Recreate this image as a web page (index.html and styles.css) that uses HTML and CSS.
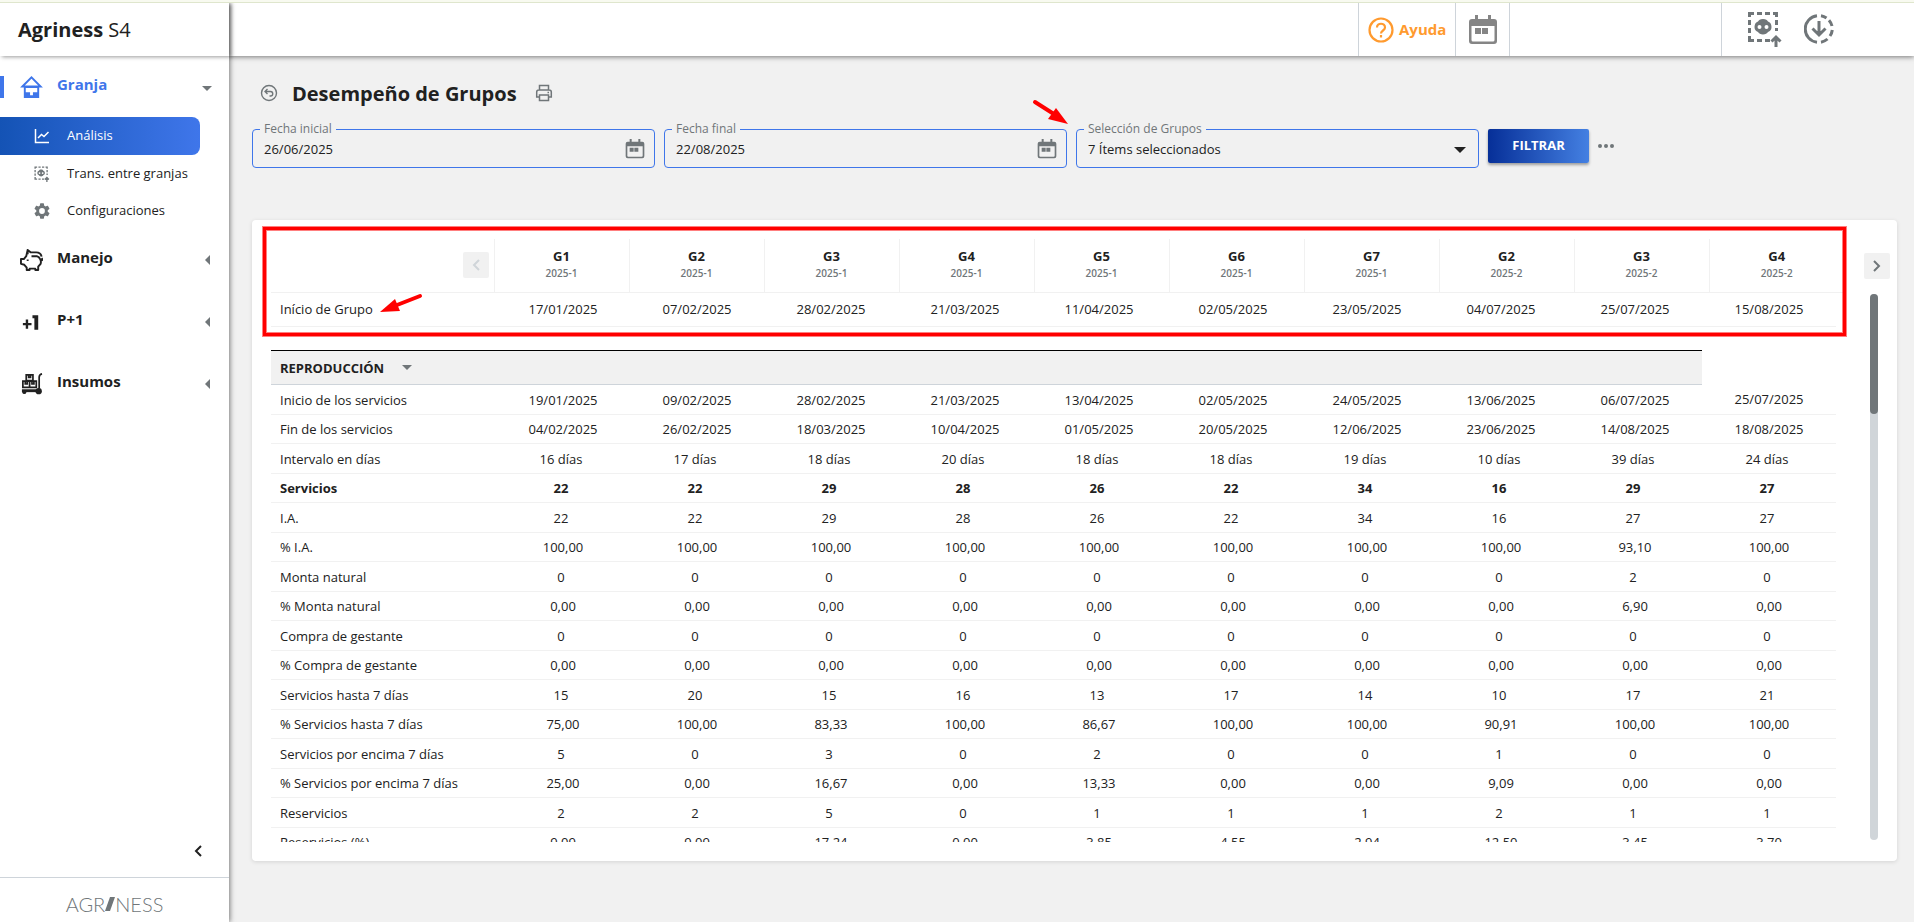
FILE: index.html
```html
<!DOCTYPE html>
<html lang="es">
<head>
    <meta charset="UTF-8">
    <meta name="viewport" content="width=device-width, initial-scale=1.0">
    <title>Agriness S4 - Desempeño de Grupos</title>
    <link rel="stylesheet" href="styles.css">
</head>
<body>

    <!-- Shared icons -->
    <svg class="sprite" aria-hidden="true">
        <symbol id="i-calendar" viewBox="0 0 30 30">
            <path fill="currentColor" fill-rule="evenodd" d="M7 0h3v4h10V0h3v4h3a3 3 0 0 1 3 3v19a3 3 0 0 1-3 3H4a3 3 0 0 1-3-3V7a3 3 0 0 1 3-3h3zM3.500 11v14a1.500 1.500 0 0 0 1.500 1.500h20a1.500 1.500 0 0 0 1.500-1.500V11z"/>
            <path fill="currentColor" d="M7 13h6v6H7zM14 13h6v6h-6z"/>
        </symbol>
        <symbol id="i-transfer" viewBox="0 0 34 36">
            <g fill="none" stroke="currentColor" stroke-width="3">
                <path d="M1.500 6V2.500H6M9 2.500h5M17 2.500h5M25 2.500h3.500V6M1.500 9v5M1.500 17v5M1.500 25v4.500H6M9 29.500h5M17 29.500h5M28.500 9v5M28.500 17v3"/>
                <path d="M28 36V26M23.500 30.500l4.500-4.500 4.500 4.500"/>
            </g>
            <path fill="currentColor" fill-rule="evenodd" d="M15 8c3 0 4 1 5 2.500 2 .5 3.500 2.500 3.500 5.500s-1.500 4-3.500 5c-1 1.500-2.500 2.500-5 2.500s-4-1-5-2.500c-2-1-3.500-2-3.500-5s1.500-5 3.500-5.500C11 9 12 8 15 8zM11.500 14a2 2 0 1 0 0 4 2 2 0 0 0 0-4zM18.500 14a2 2 0 1 0 0 4 2 2 0 0 0 0-4z"/>
        </symbol>
    </svg>

    <div class="app">
        <aside class="sidebar">
            <div class="brand"><b>Agriness</b> S4</div>

            <nav class="menu">
                <a href="#" class="menu-item active">
                    <svg class="menu-icon" viewBox="0 0 24 24"><path d="M2.500 11.500L12 2l9.500 9.500z" fill="none" stroke="currentColor" stroke-width="2"/><path fill="currentColor" fill-rule="evenodd" d="M4 11h16v12.500H4zM6 13v4.500h4.500v3h3v-3H18V13z"/></svg>
                    <span>Granja</span>
                    <i class="caret-down"></i>
                </a>
                <div class="submenu">
                    <a href="#" class="submenu-item selected">
                        <svg class="submenu-icon" viewBox="0 0 16 16"><path d="M1.500 1v13.500H15M4 10l3.500-3.500 2.500 2 4.500-4.500" fill="none" stroke="currentColor" stroke-width="1.500"/></svg>
                        <span>Análisis</span>
                    </a>
                    <a href="#" class="submenu-item">
                        <svg class="submenu-icon"><use href="#i-transfer"/></svg>
                        <span>Trans. entre granjas</span>
                    </a>
                    <a href="#" class="submenu-item">
                        <svg class="submenu-icon" viewBox="2 2 20 20"><path fill="currentColor" d="M19.140 12.940c.04-.3.060-.61.060-.94s-.02-.64-.07-.94l2.030-1.580a.49.49 0 0 0 .12-.61l-1.920-3.320a.49.49 0 0 0-.59-.22l-2.390.96a7 7 0 0 0-1.620-.94l-.36-2.540a.48.48 0 0 0-.48-.41h-3.840a.48.48 0 0 0-.47.41l-.36 2.540c-.59.24-1.130.57-1.620.94l-2.390-.96a.48.48 0 0 0-.59.22L2.740 8.870a.48.48 0 0 0 .12.61l2.030 1.580a7 7 0 0 0 0 1.880l-2.030 1.580a.49.49 0 0 0-.12.61l1.920 3.320c.12.22.37.29.59.22l2.390-.96c.5.38 1.030.7 1.620.94l.36 2.540c.05.24.24.41.48.41h3.840c.24 0 .44-.17.47-.41l.36-2.540c.59-.24 1.130-.56 1.620-.94l2.390.96c.22.080.47 0 .59-.22l1.920-3.320a.48.48 0 0 0-.12-.61zM12 15.600a3.600 3.600 0 1 1 0-7.200 3.600 3.600 0 0 1 0 7.200z"/></svg>
                        <span>Configuraciones</span>
                    </a>
                </div>
                <a href="#" class="menu-item">
                    <svg class="menu-icon" viewBox="0 0 24 24" fill="none" stroke="currentColor" stroke-width="2" stroke-linejoin="round"><path d="M8 6V1.500l3 2.500h6c3 0 5 1.500 5.500 4.500M8 1.500L6.500 8 4 11H1v5l3.500 1L7 20v2.500h3V21h6v1.500h3V19l2.500-3c1-3-.5-7-4-8H12M22.500 12.500c1-.5 1-1.500 0-2.500"/><path d="M8 11.500v1.500"/></svg>
                    <span>Manejo</span>
                    <i class="caret-left"></i>
                </a>
                <a href="#" class="menu-item">
                    <svg class="menu-icon" viewBox="0 0 24 24" fill="currentColor"><path d="M6 9.500h2.500V13H12v2.500H8.500V19H6v-3.500H3V13h3zM13 5h6v15h-4V8h-2z"/></svg>
                    <span>P+1</span>
                    <i class="caret-left"></i>
                </a>
                <a href="#" class="menu-item">
                    <svg class="menu-icon" viewBox="0 0 24 24" fill="none" stroke="currentColor" stroke-width="1.800"><path d="M6.500 2.500h7v6h-7zM3 9h7v6.500H3zM10 9h7v6.500h-7zM9 2.500h2v2.500H9zM5.500 9v3h2V9M12.500 9v3h2V9M23 1.500c-2.500.5-3 1.500-3 3.500v12"/><path d="M2 19h15" stroke-width="3"/><circle cx="4.500" cy="20.500" r="2" fill="currentColor" stroke="none"/><circle cx="19.500" cy="19.500" r="3.300" fill="currentColor" stroke="none"/></svg>
                    <span>Insumos</span>
                    <i class="caret-left"></i>
                </a>
            </nav>

            <button class="collapse" aria-label="Contraer menú">
                <svg viewBox="0 0 8 12"><path d="M7 1L2 6l5 5" fill="none" stroke="currentColor" stroke-width="2"/></svg>
            </button>
            <div class="sidebar-footer"><span>AGR</span><svg viewBox="0 0 10 14"><path fill="currentColor" d="M5 0h5L5 14H0z"/></svg><span>NESS</span></div>
        </aside>

        <div class="page">
            <header class="topbar">
                <a href="#" class="help">
                    <svg viewBox="0 0 26 26" fill="none" stroke="currentColor" stroke-width="2.200"><circle cx="13" cy="13" r="11.500"/><path d="M9 10.500c0-5 8-5 8 0 0 3-4 3-4 6M13 18v2.500"/></svg>
                    <span>Ayuda</span>
                </a>
                <button class="topbar-calendar" aria-label="Calendario"><svg><use href="#i-calendar"/></svg></button>
                <div class="topbar-account"></div>
                <div class="topbar-tools">
                    <button aria-label="Transferencias"><svg class="tool-transfer"><use href="#i-transfer"/></svg></button>
                    <button aria-label="Descargas">
                        <svg class="tool-download" viewBox="0 0 30 30" fill="none" stroke="currentColor" stroke-width="3"><path d="M13 1.700a13.400 13.400 0 0 0 0 26.600M17 1.700a13.400 13.400 0 0 1 5.500 2.200M25 6.200a13.400 13.400 0 0 1 3 5.800M28.300 16a13.400 13.400 0 0 1-2.300 6M23.500 25a13.400 13.400 0 0 1-6.500 3.200M15 7v14M8.500 14.500L15 21l6.500-6.500"/></svg>
                    </button>
                </div>
            </header>

            <main class="content">
                <div class="title-row">
                    <button class="plain" aria-label="Volver">
                        <svg viewBox="0 0 18 18" fill="none" stroke="currentColor" stroke-width="1.400"><circle cx="9" cy="9" r="7.500"/><path d="M7.500 5L5 7.500 7.500 10M5 7.500h5.500a2.200 2.200 0 0 1 0 4.500H9.500"/></svg>
                    </button>
                    <h1>Desempeño de Grupos</h1>
                    <button class="plain" aria-label="Imprimir">
                        <svg viewBox="0 0 18 18" fill="none" stroke="currentColor" stroke-width="1.500"><path d="M4.500 6V1.500h9V6M4.500 13H1.700V8C1.700 7 2.500 6 4 6h10c1.500 0 2.300 1 2.300 2v5h-2.800M4.500 11h9v5.500h-9zM12.500 8.500H14"/></svg>
                    </button>
                </div>

                <form class="filters">
                    <div class="field">
                        <label for="fecha-inicial">Fecha inicial</label>
                        <input type="text" id="fecha-inicial" value="26/06/2025">
                        <button type="button" aria-label="Elegir fecha inicial"><svg><use href="#i-calendar"/></svg></button>
                    </div>
                    <div class="field">
                        <label for="fecha-final">Fecha final</label>
                        <input type="text" id="fecha-final" value="22/08/2025">
                        <button type="button" aria-label="Elegir fecha final"><svg><use href="#i-calendar"/></svg></button>
                    </div>
                    <div class="field">
                        <label for="grupos">Selección de Grupos</label>
                        <select id="grupos"><option>7 Ítems seleccionados</option></select>
                        <i class="caret-select"></i>
                        <svg class="arrow arrow-select" viewBox="0 0 38 28"><path d="M4 4l22 14" stroke="red" stroke-width="4" stroke-linecap="round"/><path fill="red" d="M37 26L17 21l8-11z"/></svg>
                    </div>
                    <button type="button" class="btn-filter">FILTRAR</button>
                    <button type="button" class="more" aria-label="Más opciones"><i></i><i></i><i></i></button>
                </form>

                <section class="card">
                    <div class="card-main">
                        <table class="groups">
                            <thead>
                                <tr>
                                    <th class="label"><button class="pager" disabled aria-label="Grupos anteriores"><svg viewBox="0 0 8 12"><path d="M7 1L2 6l5 5" fill="none" stroke="currentColor" stroke-width="2"/></svg></button></th>
                                    <th>G1<small>2025-1</small></th>
                                    <th>G2<small>2025-1</small></th>
                                    <th>G3<small>2025-1</small></th>
                                    <th>G4<small>2025-1</small></th>
                                    <th>G5<small>2025-1</small></th>
                                    <th>G6<small>2025-1</small></th>
                                    <th>G7<small>2025-1</small></th>
                                    <th>G2<small>2025-2</small></th>
                                    <th>G3<small>2025-2</small></th>
                                    <th>G4<small>2025-2</small></th>
                                </tr>
                            </thead>
                        </table>

                        <table class="data start">
                            <tbody>
                                <tr><th class="label">Início de Grupo</th><td>17/01/2025</td><td>07/02/2025</td><td>28/02/2025</td><td>21/03/2025</td><td>11/04/2025</td><td>02/05/2025</td><td>23/05/2025</td><td>04/07/2025</td><td>25/07/2025</td><td>15/08/2025</td></tr>
                            </tbody>
                        </table>

                        <div class="scroll">
                            <table class="data">
                                <colgroup><col class="label"><col span="10"></colgroup>
                                <thead>
                                    <tr><th colspan="10" class="section">REPRODUCCIÓN <i class="caret-down"></i></th></tr>
                                </thead>
                                <tbody>
                                    <tr><th>Inicio de los servicios</th><td>19/01/2025</td><td>09/02/2025</td><td>28/02/2025</td><td>21/03/2025</td><td>13/04/2025</td><td>02/05/2025</td><td>24/05/2025</td><td>13/06/2025</td><td>06/07/2025</td><td>25/07/2025</td></tr>
                                    <tr><th>Fin de los servicios</th><td>04/02/2025</td><td>26/02/2025</td><td>18/03/2025</td><td>10/04/2025</td><td>01/05/2025</td><td>20/05/2025</td><td>12/06/2025</td><td>23/06/2025</td><td>14/08/2025</td><td>18/08/2025</td></tr>
                                    <tr class="count"><th>Intervalo en días</th><td>16 días</td><td>17 días</td><td>18 días</td><td>20 días</td><td>18 días</td><td>18 días</td><td>19 días</td><td>10 días</td><td>39 días</td><td>24 días</td></tr>
                                    <tr class="count total"><th>Servicios</th><td>22</td><td>22</td><td>29</td><td>28</td><td>26</td><td>22</td><td>34</td><td>16</td><td>29</td><td>27</td></tr>
                                    <tr class="count"><th>I.A.</th><td>22</td><td>22</td><td>29</td><td>28</td><td>26</td><td>22</td><td>34</td><td>16</td><td>27</td><td>27</td></tr>
                                    <tr><th>% I.A.</th><td>100,00</td><td>100,00</td><td>100,00</td><td>100,00</td><td>100,00</td><td>100,00</td><td>100,00</td><td>100,00</td><td>93,10</td><td>100,00</td></tr>
                                    <tr class="count"><th>Monta natural</th><td>0</td><td>0</td><td>0</td><td>0</td><td>0</td><td>0</td><td>0</td><td>0</td><td>2</td><td>0</td></tr>
                                    <tr><th>% Monta natural</th><td>0,00</td><td>0,00</td><td>0,00</td><td>0,00</td><td>0,00</td><td>0,00</td><td>0,00</td><td>0,00</td><td>6,90</td><td>0,00</td></tr>
                                    <tr class="count"><th>Compra de gestante</th><td>0</td><td>0</td><td>0</td><td>0</td><td>0</td><td>0</td><td>0</td><td>0</td><td>0</td><td>0</td></tr>
                                    <tr><th>% Compra de gestante</th><td>0,00</td><td>0,00</td><td>0,00</td><td>0,00</td><td>0,00</td><td>0,00</td><td>0,00</td><td>0,00</td><td>0,00</td><td>0,00</td></tr>
                                    <tr class="count"><th>Servicios hasta 7 días</th><td>15</td><td>20</td><td>15</td><td>16</td><td>13</td><td>17</td><td>14</td><td>10</td><td>17</td><td>21</td></tr>
                                    <tr><th>% Servicios hasta 7 días</th><td>75,00</td><td>100,00</td><td>83,33</td><td>100,00</td><td>86,67</td><td>100,00</td><td>100,00</td><td>90,91</td><td>100,00</td><td>100,00</td></tr>
                                    <tr class="count"><th>Servicios por encima 7 días</th><td>5</td><td>0</td><td>3</td><td>0</td><td>2</td><td>0</td><td>0</td><td>1</td><td>0</td><td>0</td></tr>
                                    <tr><th>% Servicios por encima 7 días</th><td>25,00</td><td>0,00</td><td>16,67</td><td>0,00</td><td>13,33</td><td>0,00</td><td>0,00</td><td>9,09</td><td>0,00</td><td>0,00</td></tr>
                                    <tr class="count"><th>Reservicios</th><td>2</td><td>2</td><td>5</td><td>0</td><td>1</td><td>1</td><td>1</td><td>2</td><td>1</td><td>1</td></tr>
                                    <tr><th>Reservicios (%)</th><td>9,09</td><td>9,09</td><td>17,24</td><td>0,00</td><td>3,85</td><td>4,55</td><td>2,94</td><td>12,50</td><td>3,45</td><td>3,70</td></tr>
                                </tbody>
                            </table>
                        </div>
                        <div class="highlight"></div>
                        <svg class="arrow arrow-start" viewBox="0 0 46 22"><path d="M41 4L18 13" stroke="red" stroke-width="4" stroke-linecap="round"/><path fill="red" d="M1 20L16 7l5 12z"/></svg>
                    </div>

                    <div class="card-rail">
                        <button class="pager" aria-label="Grupos siguientes"><svg viewBox="0 0 8 12"><path d="M1 1l5 5-5 5" fill="none" stroke="currentColor" stroke-width="2"/></svg></button>
                        <div class="track"><div class="thumb"></div></div>
                    </div>
                </section>
            </main>
        </div>
    </div>

</body>
</html>
```
FILE: styles.css
```css
:root {
    --blue: #3f76ea;
    --text: #212121;
    --grey: #707679;
    --line: #f1f1f1;
    --border: #ced4da;
    --orange: #ff9a2e;
}

* {
    box-sizing: border-box;
}

body {
    margin: 0;
    border-top: 2px solid #f8faf0;
    background: #f1f1f1;
    font-family: "Open Sans", sans-serif;
    font-size: 13px;
    color: var(--text);
}

button {
    border: 0;
    padding: 0;
    background: none;
    font: inherit;
    color: var(--grey);
    cursor: pointer;
}

a {
    color: inherit;
    text-decoration: none;
}

svg {
    display: block;
}

.sprite {
    display: none;
}

.app {
    display: flex;
    height: calc(100vh - 2px);
    border-top: 1px solid #dfe6cd;
    overflow: hidden;
}

/* Sidebar */
.sidebar {
    width: 229px;
    flex: none;
    display: flex;
    flex-direction: column;
    background: #fff;
    box-shadow: 1px 0 5px rgba(0, 0, 0, 0.5);
    z-index: 2;
}

.brand {
    height: 53px;
    padding-left: 18px;
    font-size: 20px;
    line-height: 54px;
    box-shadow: 2px 1px 4px rgba(0, 0, 0, 0.4);
}

.menu {
    flex: 1;
}

.menu-item {
    display: flex;
    align-items: center;
    height: 62px;
    padding: 0 19px 0 20px;
    gap: 14px;
    font-size: 15px;
    font-weight: 700;
}

.menu-item span {
    flex: 1;
    padding-bottom: 6px;
}

.menu-item.active {
    height: 61px;
    padding-right: 17px;
    color: var(--blue);
    position: relative;
}

.menu-item.active::before {
    content: "";
    position: absolute;
    left: 0;
    width: 4px;
    height: 22px;
    background: var(--blue);
}

.menu-item .caret-down {
    margin-top: 4px;
}

.menu-icon {
    width: 23px;
    height: 24px;
}

.submenu-item {
    display: flex;
    align-items: center;
    height: 37px;
    padding-left: 34px;
    gap: 17px;
}

.submenu-item span {
    padding-bottom: 2px;
}

.submenu-item.selected {
    width: 200px;
    height: 38px;
    border-radius: 0 8px 8px 0;
    background: linear-gradient(90deg, #1453b5, #3f76ea);
    color: #fff;
}

.submenu-icon {
    width: 16px;
    height: 16px;
    color: var(--grey);
}

.selected .submenu-icon {
    color: #fff;
}

.caret-down {
    border: 5px solid transparent;
    border-top-color: var(--grey);
    border-bottom: 0;
}

.caret-left {
    border: 5px solid transparent;
    border-right-color: var(--grey);
    border-left: 0;
}

.collapse {
    align-self: flex-end;
    margin: 0 27px 20px 0;
    color: var(--text);
}

.collapse svg {
    width: 8px;
    height: 12px;
}

.sidebar-footer {
    display: flex;
    align-items: center;
    justify-content: center;
    height: 45px;
    padding-top: 8px;
    border-top: 1px solid var(--border);
    font-family: Lato, sans-serif;
    font-size: 20px;
    font-weight: 300;
    color: var(--grey);
}

.sidebar-footer svg {
    width: 10px;
    height: 14px;
}

/* Top bar */
.page {
    flex: 1;
    min-width: 0;
    display: flex;
    flex-direction: column;
}

.topbar {
    display: flex;
    justify-content: flex-end;
    height: 53px;
    background: #fff;
    box-shadow: 0 1px 5px rgba(0, 0, 0, 0.5);
    z-index: 1;
}

.topbar > * {
    display: flex;
    align-items: center;
    border-left: 1px solid var(--border);
}

.help {
    width: 97px;
    padding-left: 9px;
    gap: 5px;
    font-size: 15px;
    font-weight: 700;
    color: var(--orange);
}

.help svg {
    width: 26px;
    height: 26px;
}

.help span {
    padding-bottom: 2px;
}

.topbar-calendar {
    width: 54px;
    justify-content: center;
    color: #858585;
}

.topbar-calendar svg {
    width: 30px;
    height: 30px;
}

.topbar-account {
    width: 212px;
}

.topbar-tools {
    width: 193px;
    padding: 0 0 2px 26px;
    gap: 22px;
}

.tool-transfer {
    width: 34px;
    height: 36px;
}

.tool-download {
    width: 30px;
    height: 30px;
}

/* Content */
.content {
    flex: 1;
    min-height: 0;
    display: flex;
    flex-direction: column;
    padding: 23px 17px 61px 23px;
}

.title-row {
    display: flex;
    align-items: center;
    height: 28px;
    padding-left: 8px;
    gap: 14px;
}

.title-row svg {
    width: 18px;
    height: 18px;
}

.title-row h1 {
    margin: 0 4px 0 0;
    font-size: 20px;
    font-weight: 700;
}

.filters {
    display: flex;
    gap: 9px;
    margin: 22px 283px 52px 0;
}

.field {
    flex: 1;
    display: flex;
    align-items: center;
    position: relative;
    height: 39px;
    padding-right: 9px;
    border: 1px solid var(--blue);
    border-radius: 4px;
}

.field label {
    position: absolute;
    top: -9px;
    left: 7px;
    padding: 0 4px;
    background: #f1f1f1;
    font-size: 12px;
    line-height: 16px;
    color: var(--grey);
}

.field input,
.field select {
    flex: 1;
    min-width: 0;
    height: 100%;
    padding: 0 0 0 11px;
    border: 0;
    outline: 0;
    background: none;
    font: inherit;
    color: inherit;
    appearance: none;
}

.field button svg {
    width: 20px;
    height: 20px;
}

.caret-select {
    margin: 2px 3px 0 0;
    border: 6px solid transparent;
    border-top-color: var(--text);
    border-bottom: 0;
    pointer-events: none;
}

.btn-filter {
    width: 101px;
    height: 34px;
    padding-bottom: 2px;
    border-radius: 2px;
    background: linear-gradient(90deg, #062f98, #4480e2);
    box-shadow: 0 2px 3px rgba(0, 0, 0, 0.35);
    font-weight: 700;
    color: #fff;
}

.more {
    display: flex;
    align-items: center;
    gap: 2px;
    height: 34px;
}

.more i {
    width: 4px;
    height: 4px;
    border-radius: 50%;
    background: var(--grey);
}

/* Card */
.card {
    flex: 1;
    min-height: 0;
    display: flex;
    padding: 19px 7px 19px 19px;
    border-radius: 4px;
    background: #fff;
    box-shadow: 0 1px 4px rgba(0, 0, 0, 0.12);
}

.card-main {
    flex: 1;
    min-width: 0;
    display: flex;
    flex-direction: column;
    position: relative;
}

table {
    width: 100%;
    table-layout: fixed;
    border-collapse: collapse;
}

th,
td {
    padding: 0;
    text-align: center;
}

.groups th {
    height: 53px;
    border-left: 1px solid var(--line);
    border-bottom: 1px solid var(--line);
    font-size: 13px;
    line-height: 17px;
}

.groups .label {
    width: 223px;
    border-left: 0;
}

.groups small {
    display: block;
    font-size: 10px;
    font-weight: 600;
    color: var(--grey);
}

.pager {
    display: grid;
    place-items: center;
    width: 26px;
    height: 26px;
    border-radius: 2px;
    background: #f1f1f1;
}

.pager:disabled {
    margin: 0 5px 0 auto;
    color: #d0d5d9;
}

.pager svg {
    width: 8px;
    height: 12px;
}

.data {
    width: calc(100% - 8px);
}

.data .label {
    width: 225px;
}

.data tbody tr {
    height: 30px;
    border-bottom: 1px solid var(--line);
}

.data tbody tr:nth-child(even) {
    height: 29px;
}

.data tbody th {
    padding-left: 9px;
    text-align: left;
    font-weight: 400;
}

.data.start tbody tr {
    height: 34px;
}

.count td {
    padding-right: 4px;
}

.data .total th,
.total td {
    font-weight: 700;
}

.scroll {
    flex: 1;
    min-height: 0;
    margin-top: 23px;
    overflow: hidden;
}

.section {
    height: 34px;
    padding-left: 9px;
    border-top: 1px solid #000;
    border-bottom: 1px solid var(--border);
    background: #f1f1f1;
    text-align: left;
}

.section .caret-down {
    display: inline-block;
    margin: 0 0 3px 14px;
}

.card-rail {
    display: flex;
    flex-direction: column;
    width: 26px;
    margin-left: 20px;
    padding-top: 14px;
}

.track {
    flex: 1;
    width: 8px;
    margin: 15px 0 2px 6px;
    border-radius: 4px;
    background: #d0d5d9;
}

.thumb {
    height: 22%;
    border-radius: 4px;
    background: var(--grey);
}

/* Marks drawn over the table */
.highlight {
    position: absolute;
    top: -12px;
    left: -8px;
    right: -2px;
    height: 109px;
    border: 3px solid #f00;
    box-shadow: 0 0 0 1px rgba(255, 0, 0, 0.5), inset 0 0 0 1px rgba(255, 0, 0, 0.5);
    pointer-events: none;
}

.arrow {
    position: absolute;
    fill: none;
    pointer-events: none;
}

.arrow-select {
    width: 38px;
    height: 28px;
    left: -46px;
    top: -32px;
}

.arrow-start {
    width: 46px;
    height: 22px;
    left: 108px;
    top: 53px;
}
```
